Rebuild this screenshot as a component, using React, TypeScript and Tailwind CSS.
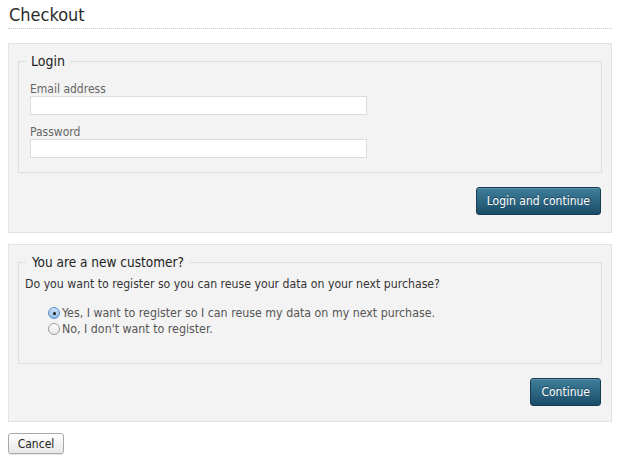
import React from "react";

const font = { fontFamily: '"DejaVu Sans Condensed", "DejaVu Sans", Verdana, sans-serif' };

function Radio({ checked }: { checked?: boolean }) {
  return (
    <span
      className={
        "relative inline-block w-[12px] h-[12px] rounded-full border shrink-0 " +
        (checked
          ? "border-[#5b8fc9] bg-gradient-to-b from-[#cfe3f7] to-[#8fb8e6]"
          : "border-[#9a9a9a] bg-gradient-to-b from-[#ffffff] to-[#e6e6e6]")
      }
    >
      {checked && (
        <span className="absolute left-[3.5px] top-[3.5px] w-[3px] h-[3px] rounded-full bg-[#1a1a1a]" />
      )}
    </span>
  );
}

function BlueButton({ children }: { children: React.ReactNode }) {
  return (
    <button className="h-[28px] px-[10px] rounded-[3px] border border-[#163d52] bg-gradient-to-b from-[#3f7f9c] to-[#1b4d68] text-white text-[12px] font-normal [text-shadow:0_-1px_0_rgba(0,0,0,0.35)] shadow-[inset_0_1px_0_rgba(255,255,255,0.15)]">
      {children}
    </button>
  );
}

export default function App() {
  return (
    <div className="w-[620px] h-[458px] bg-white text-[#333] px-[8px] pt-[4px]" style={font}>
      <h1 className="text-[18px] leading-[21px] pl-[1px] text-[#2b2b2b] pb-[3px] border-b border-dotted border-[#c8c8c8]">
        Checkout
      </h1>

      <div className="mt-[14px] h-[190px] border border-[#e2e2e2] bg-[#f3f3f3] px-[9px] pt-[9px] flex flex-col">
        <fieldset className="border border-[#dedede] h-[120px] px-[11px]">
          <legend className="-ml-[4px] px-[5px] text-[14px] leading-[16px] text-[#222]">Login</legend>
          <div className="mt-[13px] flex flex-col">
            <label className="text-[12px] leading-[14px] text-[#666]">Email address</label>
            <input className="w-[337px] h-[19px] border border-[#dcdcdc] bg-white" />
            <label className="mt-[10px] text-[12px] leading-[14px] text-[#666]">Password</label>
            <input className="w-[337px] h-[19px] border border-[#dcdcdc] bg-white" />
          </div>
        </fieldset>
        <div className="flex justify-end pr-[1px] mt-[14px]">
          <BlueButton>Login and continue</BlueButton>
        </div>
      </div>

      <div className="mt-[11px] h-[178px] border border-[#e2e2e2] bg-[#f3f3f3] px-[9px] pt-[9px] flex flex-col">
        <fieldset className="border border-[#dedede] h-[110px] px-[6px]">
          <legend className="ml-[1px] px-[6px] text-[13.5px] leading-[16px] text-[#222]">You are a new customer?</legend>
          <p className="mt-[7px] text-[12.2px] leading-[14px] text-[#333]">
            Do you want to register so you can reuse your data on your next purchase?
          </p>
          <div className="mt-[15px] pl-[23px] flex flex-col gap-[2px] text-[12.3px] leading-[14px] text-[#555]">
            <label className="flex items-center gap-[2px]">
              <Radio checked />
              <span>Yes, I want to register so I can reuse my data on my next purchase.</span>
            </label>
            <label className="flex items-center gap-[2px]">
              <Radio />
              <span>No, I don't want to register.</span>
            </label>
          </div>
        </fieldset>
        <div className="flex justify-end pr-[1px] mt-[14px]">
          <BlueButton>Continue</BlueButton>
        </div>
      </div>

      <button className="mt-[11px] h-[21px] w-[56px] rounded-[3px] border border-[#a8a8a8] bg-gradient-to-b from-[#ffffff] to-[#e8e8e8] text-[12px] text-[#222] shadow-[0_1px_1px_rgba(0,0,0,0.1)]">
        Cancel
      </button>
    </div>
  );
}
